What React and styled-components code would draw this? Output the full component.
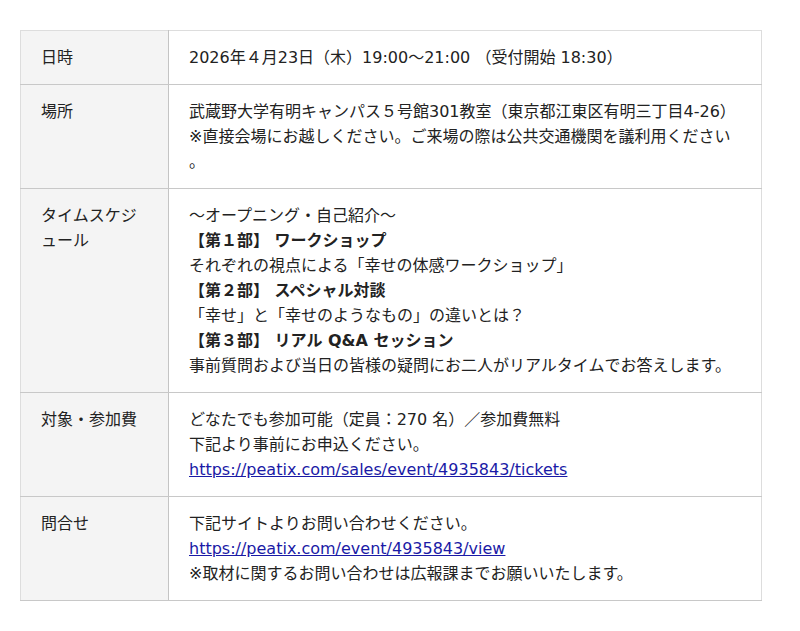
import React from 'react';
import styled, { createGlobalStyle } from 'styled-components';

const GlobalStyle = createGlobalStyle`
    body {
        margin: 0;
        background: #fff;
        font-family: "DejaVu Sans", "Noto Sans CJK JP", sans-serif;
        color: #222;
    }
`;

const Page = styled.div`
    padding: 30px 38px 30px 20px;
`;

const Table = styled.table`
    width: 742px;
    border-collapse: collapse;
    border: 1px solid #ddd;
    font-size: 16px;
    line-height: 25px;
`;

const Label = styled.th`
    width: 107px;
    padding: 14px 20px;
    background-color: #f4f4f4;
    border-right: 1px solid #c4c4c4;
    border-bottom: 1px solid #c8c8c8;
    text-align: left;
    vertical-align: top;
    font-weight: normal;
    line-break: loose;
`;

const Value = styled.td`
    padding: 14px 20px;
    border-bottom: 1px solid #c8c8c8;
    vertical-align: top;
`;

const Line = styled.div`
    font-weight: ${p => (p.$bold ? 700 : 400)};
`;

const Link = styled.a`
    color: #1a1aa6;
    text-decoration: underline;
`;

const rows = [
    {
        label: '日時',
        lines: [{ text: '2026年４月23日（木）19:00〜21:00 （受付開始 18:30）' }],
    },
    {
        label: '場所',
        lines: [
            { text: '武蔵野大学有明キャンパス５号館301教室（東京都江東区有明三丁目4-26）' },
            { text: '※直接会場にお越しください。ご来場の際は公共交通機関を議利用ください' },
            { text: '。' },
        ],
    },
    {
        label: 'タイムスケジュール',
        lines: [
            { text: '〜オープニング・自己紹介〜' },
            { text: '【第１部】 ワークショップ', bold: true },
            { text: 'それぞれの視点による「幸せの体感ワークショップ」' },
            { text: '【第２部】 スペシャル対談', bold: true },
            { text: '「幸せ」と「幸せのようなもの」の違いとは？' },
            { text: '【第３部】 リアル Q&A セッション', bold: true },
            { text: '事前質問および当日の皆様の疑問にお二人がリアルタイムでお答えします。' },
        ],
    },
    {
        label: '対象・参加費',
        lines: [
            { text: 'どなたでも参加可能（定員：270 名）／参加費無料' },
            { text: '下記より事前にお申込ください。' },
            { text: 'https://peatix.com/sales/event/4935843/tickets', link: true },
        ],
    },
    {
        label: '問合せ',
        lines: [
            { text: '下記サイトよりお問い合わせください。' },
            { text: 'https://peatix.com/event/4935843/view', link: true },
            { text: '※取材に関するお問い合わせは広報課までお願いいたします。' },
        ],
    },
];

export default function App() {
    return (
        <>
            <GlobalStyle />
            <Page>
                <Table>
                    <tbody>
                        {rows.map(row => (
                            <tr key={row.label}>
                                <Label>{row.label}</Label>
                                <Value>
                                    {row.lines.map((l, i) => (
                                        <Line key={i} $bold={l.bold}>
                                            {l.link ? <Link href={l.text}>{l.text}</Link> : l.text}
                                        </Line>
                                    ))}
                                </Value>
                            </tr>
                        ))}
                    </tbody>
                </Table>
            </Page>
        </>
    );
}
